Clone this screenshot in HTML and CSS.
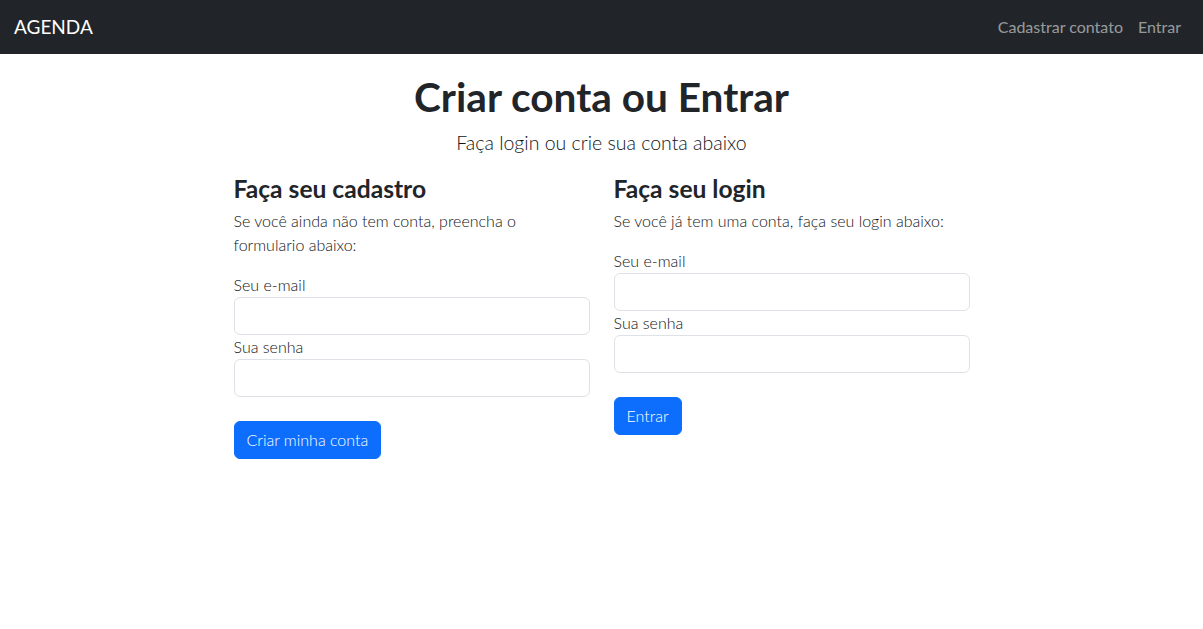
FILE: index.html
```html
<!DOCTYPE html>
<html lang="pt-BR">
<head>
<meta charset="utf-8">
<title>Agenda</title>
<link rel="stylesheet" href="styles.css">
</head>
<body>
<nav class="navbar">
  <a class="brand" href="#">AGENDA</a>
  <ul class="nav">
    <li><a href="#">Cadastrar contato</a></li>
    <li><a href="#">Entrar</a></li>
  </ul>
</nav>
<main class="container">
  <div class="wrap">
    <h1 class="title">Criar conta ou Entrar</h1>
    <p class="lead">Faça login ou crie sua conta abaixo</p>
    <div class="row">
      <section class="col">
        <h3 class="sub">Faça seu cadastro</h3>
        <p class="text">Se você ainda não tem conta, preencha o formulario abaixo:</p>
        <form class="form">
          <label class="label">Seu e-mail</label>
          <input class="input" type="email">
          <label class="label">Sua senha</label>
          <input class="input" type="password">
          <button class="btn" type="button">Criar minha conta</button>
        </form>
      </section>
      <section class="col">
        <h3 class="sub">Faça seu login</h3>
        <p class="text">Se você já tem uma conta, faça seu login abaixo:</p>
        <form class="form">
          <label class="label">Seu e-mail</label>
          <input class="input" type="email">
          <label class="label">Sua senha</label>
          <input class="input" type="password">
          <button class="btn" type="button">Entrar</button>
        </form>
      </section>
    </div>
  </div>
</main>
</body>
</html>
```

FILE: styles.css
```css
* { box-sizing: border-box; }
body {
  margin: 0;
  font-family: Lato, "Noto Sans", sans-serif;
  font-size: 16px;
  line-height: 1.5;
  color: #212529;
  background: #fff;
}
.navbar {
  background: #212529;
  height: 54px;
  display: flex;
  align-items: center;
  justify-content: space-between;
  padding: 0 14px 0 14px;
}
.brand {
  color: #fff;
  text-decoration: none;
  font-size: 19px;
}
.nav {
  list-style: none;
  display: flex;
  margin: 0;
  padding: 0 8px 0 0;
  gap: 15px;
}
.nav a {
  color: rgba(255,255,255,.55);
  text-decoration: none;
  font-size: 16px;
}
.container {
  width: 1140px;
  margin: 0 auto;
  padding: 0 12px;
  display: flex;
  justify-content: center;
}
.wrap {
  width: 736px;
  padding-top: 19px;
}
.title {
  margin: 0 0 6px;
  text-align: center;
  font-size: 40.6px;
  line-height: 1.2;
  font-weight: 700;
}
.lead {
  margin: 0 0 17px;
  text-align: center;
  font-size: 19.5px;
  font-weight: 300;
  color: #111417;
}
.row {
  display: grid;
  grid-template-columns: 1fr 1fr;
  column-gap: 24px;
}
.sub {
  margin: 0 0 6px;
  font-size: 24.6px;
  line-height: 1.2;
  font-weight: 700;
}
.text {
  margin: 0 0 16px;
  font-size: 16px;
  font-weight: 300;
  color: #111417;
}
.form {
  display: flex;
  flex-direction: column;
  align-items: flex-start;
}
.label {
  font-size: 16px;
  font-weight: 300;
  line-height: 24px;
  color: #111417;
}
.input {
  width: 100%;
  height: 38px;
  border: 1px solid #dee2e6;
  border-radius: 6px;
  font: inherit;
  padding: 6px 12px;
}
.btn {
  margin-top: 24px;
  height: 38px;
  padding: 0 12px;
  border: 1px solid #0d6efd;
  background: #0d6efd;
  color: #fff;
  border-radius: 6px;
  font: inherit;
  font-weight: 300;
}
```
